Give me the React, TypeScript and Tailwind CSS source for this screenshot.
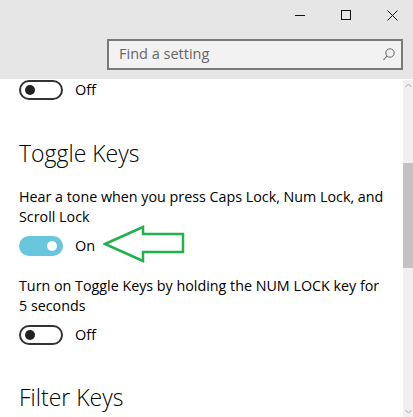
import React from "react";

function Toggle({ on }: { on: boolean }) {
  if (on) {
    return (
      <div className="w-[44px] h-[20px] rounded-full bg-[#68c7dd] flex items-center justify-end pr-[6px]">
        <div className="w-[10px] h-[10px] rounded-full bg-white" />
      </div>
    );
  }
  return (
    <div className="w-[44px] h-[20px] rounded-full border-2 border-[#333333] flex items-center pl-[4px]">
      <div className="w-[10px] h-[10px] rounded-full bg-[#222222]" />
    </div>
  );
}

export default function App() {
  return (
    <div
      className="w-[413px] h-[417px] overflow-hidden flex flex-col bg-white text-black"
      style={{ fontFamily: '"Open Sans", "Noto Sans", sans-serif' }}
    >
      <div className="h-[79px] bg-[#e6e6e6] flex flex-col shrink-0">
        <div className="h-[30px] flex justify-end mr-[-2px]">
          <div className="w-[46px] h-[30px] flex items-center justify-center">
            <svg width="10" height="10" viewBox="0 0 10 10">
              <line x1="0" y1="5.5" x2="10" y2="5.5" stroke="#111" strokeWidth="1" />
            </svg>
          </div>
          <div className="w-[46px] h-[30px] flex items-center justify-center">
            <svg width="10" height="10" viewBox="0 0 10 10">
              <rect x="0.5" y="0.5" width="9" height="9" fill="none" stroke="#111" strokeWidth="1" />
            </svg>
          </div>
          <div className="w-[46px] h-[30px] flex items-center justify-center">
            <svg width="11" height="11" viewBox="0 0 11 11">
              <line x1="0.5" y1="0.5" x2="10.5" y2="10.5" stroke="#111" strokeWidth="1" />
              <line x1="10.5" y1="0.5" x2="0.5" y2="10.5" stroke="#111" strokeWidth="1" />
            </svg>
          </div>
        </div>
        <div className="flex justify-end pr-[10px] pt-[9px]">
          <div className="w-[296px] h-[31px] border-2 border-[#7a7a7a] bg-[#f2f2f2] flex items-center pl-[10px] pr-[6px]">
            <span className="flex-1 text-[14.5px] text-[#666666] leading-none">Find a setting</span>
            <svg width="12" height="13" viewBox="0 0 12 13">
              <circle cx="7" cy="5" r="4.2" fill="none" stroke="#666" strokeWidth="1" />
              <line x1="4" y1="8" x2="0.5" y2="12" stroke="#666" strokeWidth="1.1" />
            </svg>
          </div>
        </div>
      </div>
      <div className="flex-1 flex min-h-0">
        <div className="flex-1 pl-[19px] flex flex-col">
          <div className="mt-[1px] h-[20px] flex items-center gap-[12px]">
            <Toggle on={false} />
            <span className="text-[14.5px] leading-none">Off</span>
          </div>
          <div className="mt-[37px] text-[23px] leading-[32px] font-light">Toggle Keys</div>
          <div className="mt-[18px] text-[14.3px] leading-[20px] whitespace-nowrap">
            Hear a tone when you press Caps Lock, Num Lock, and
            <br />
            Scroll Lock
          </div>
          <div className="relative mt-[9px] h-[20px] flex items-center gap-[12px]">
            <Toggle on={true} />
            <span className="text-[14.5px] leading-none">On</span>
            <svg
              className="absolute left-[84px] top-[-11px]"
              width="84"
              height="40"
              viewBox="0 0 84 40"
            >
              <polygon
                points="2,19 40,2 40,9 80,9 80,27 40,27 40,36"
                fill="none"
                stroke="#22b14c"
                strokeWidth="2.5"
                strokeLinejoin="miter"
              />
            </svg>
          </div>
          <div className="mt-[20px] text-[14.3px] leading-[20px] whitespace-nowrap">
            Turn on Toggle Keys by holding the NUM LOCK key for
            <br />5 seconds
          </div>
          <div className="mt-[9px] h-[20px] flex items-center gap-[12px]">
            <Toggle on={false} />
            <span className="text-[14.5px] leading-none">Off</span>
          </div>
          <div className="mt-[36px] text-[23px] leading-[32px] font-light">Filter Keys</div>
        </div>
        <div className="w-[10px] mt-[1px] bg-[#f0f0f0] flex flex-col items-center">
          <svg className="mt-[3px]" width="7" height="5" viewBox="0 0 7 5">
            <polyline points="0.5,4 3.5,1 6.5,4" fill="none" stroke="#a6a6a6" strokeWidth="1" />
          </svg>
          <div className="mt-[75px] w-[10px] h-[105px] bg-[#c2c2c2]" />
          <div className="flex-1" />
          <svg className="mb-[3px]" width="7" height="5" viewBox="0 0 7 5">
            <polyline points="0.5,1 3.5,4 6.5,1" fill="none" stroke="#a6a6a6" strokeWidth="1" />
          </svg>
        </div>
      </div>
    </div>
  );
}
